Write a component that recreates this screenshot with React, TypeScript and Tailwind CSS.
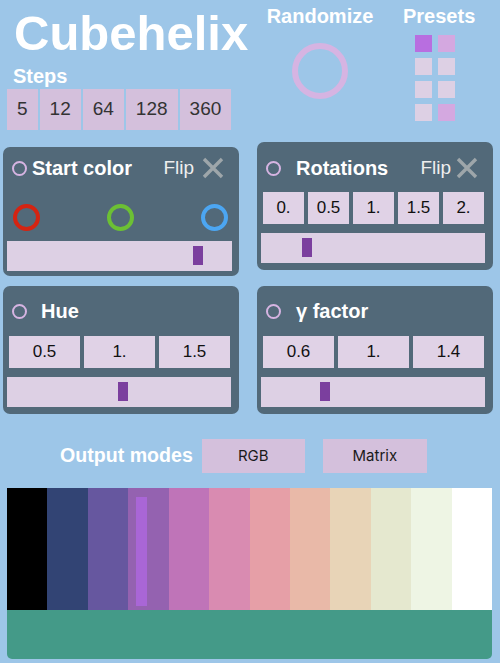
import React from 'react';

const STEPS = ['5', '12', '64', '128', '360'];

const PRESETS = ['#b86ee0', '#d4a8e0', '#ddd0e4', '#ddd0e4', '#ddd0e4', '#ddd0e4', '#ddd0e4', '#d4a8e0'];

const SWATCHES = [
  '#000000',
  '#324474',
  '#66579f',
  '#9462b0',
  '#bf74b8',
  '#d98bb1',
  '#e69fa7',
  '#e9b9a8',
  '#e8d4b7',
  '#e5e8cf',
  '#eef5e4',
  '#ffffff',
];

const Ring: React.FC = () => (
  <div className="h-[15px] w-[15px] shrink-0 rounded-full border-2 border-[#d6b4e2]" />
);

const CloseX: React.FC = () => (
  <svg width="22" height="22" viewBox="0 0 22 22" className="shrink-0">
    <path d="M2 2 L20 20 M20 2 L2 20" stroke="#9ea6aa" strokeWidth="3.4" strokeLinecap="butt" />
  </svg>
);

const Slider: React.FC<{ at: number }> = ({ at }) => (
  <div className="relative h-[30px] bg-[#ddd0e4]">
    <div className="absolute top-[5px] h-[19px] w-[10px] bg-[#7b3f9e]" style={{ left: at }} />
  </div>
);

const ValueRow: React.FC<{ values: string[] }> = ({ values }) => (
  <div className="ml-[2px] mr-[1px] flex gap-[4px]">
    {values.map((v) => (
      <div key={v} className="flex h-[32px] flex-1 items-center justify-center bg-[#e0d2e6] text-[17px] text-[#111]">
        {v}
      </div>
    ))}
  </div>
);

export default function App() {
  return (
    <div className="h-[663px] w-[500px] overflow-hidden bg-[#9dc6e8] font-['Liberation_Sans',Arial,sans-serif]">
      {/* top area */}
      <div className="flex">
        <div className="w-[250px] pl-[7px]">
          <h1 className="ml-[7px] pt-[9px] text-[49px] font-bold leading-none text-white">Cubehelix</h1>
          <div className="ml-[6px] mt-[8px] text-[20px] font-bold leading-none text-white">Steps</div>
          <div className="mt-[3px] flex gap-[2px]">
            {STEPS.map((s) => (
              <div key={s} className="flex h-[41px] items-center bg-[#d4c0dc] px-[10px] text-[19px] text-[#333]">
                {s}
              </div>
            ))}
          </div>
        </div>
        <div className="flex w-[140px] flex-col items-center pt-[6px]">
          <div className="text-[20px] font-bold leading-none text-white">Randomize</div>
          <div className="mt-[17px] h-[56px] w-[56px] rounded-full border-[6px] border-[#d6b4e2]" />
        </div>
        <div className="ml-[13px] pt-[6px]">
          <div className="text-[20px] font-bold leading-none text-white">Presets</div>
          <div className="ml-[12px] mt-[9px] grid w-[40px] grid-cols-2 gap-[6px]">
            {PRESETS.map((c, i) => (
              <div key={i} className="h-[17px] w-[17px]" style={{ backgroundColor: c }} />
            ))}
          </div>
        </div>
      </div>

      {/* panel row 1 */}
      <div className="mt-[12px] flex items-start gap-[18px] pl-[3px]">
        <div className="mt-[5px] w-[236px] rounded-[7px] bg-[#526979] pb-[5px] pl-[4px] pr-[7px] pt-[6px]">
          <div className="flex h-[30px] items-center pl-[5px] pr-[8px]">
            <Ring />
            <span className="ml-[5px] text-[20px] font-bold text-white">Start color</span>
            <span className="ml-auto text-[19px] text-[#eeeeee]">Flip</span>
            <span className="ml-[8px]">
              <CloseX />
            </span>
          </div>
          <div className="ml-[6px] mr-[4px] mt-[21px] flex justify-between">
            <div className="h-[27px] w-[27px] rounded-full border-[4px] border-[#d42412]" />
            <div className="h-[27px] w-[27px] rounded-full border-[4px] border-[#6cc034]" />
            <div className="h-[27px] w-[27px] rounded-full border-[4px] border-[#4ca6f2]" />
          </div>
          <div className="mt-[10px]">
            <Slider at={186} />
          </div>
        </div>

        <div className="w-[236px] rounded-[7px] bg-[#526979] pb-[7px] pl-[4px] pr-[8px] pt-[11px]">
          <div className="flex h-[30px] items-center pl-[5px] pr-[7px]">
            <Ring />
            <span className="ml-[15px] text-[20px] font-bold text-white">Rotations</span>
            <span className="ml-auto text-[19px] text-[#eeeeee]">Flip</span>
            <span className="ml-[5px]">
              <CloseX />
            </span>
          </div>
          <div className="mt-[9px]">
            <ValueRow values={['0.', '0.5', '1.', '1.5', '2.']} />
          </div>
          <div className="mt-[9px]">
            <Slider at={41} />
          </div>
        </div>
      </div>

      {/* panel row 2 */}
      <div className="mt-[10px] flex items-start gap-[18px] pl-[3px]">
        <div className="w-[236px] rounded-[7px] bg-[#526979] pb-[7px] pl-[4px] pr-[8px] pt-[10px]">
          <div className="flex h-[30px] items-center pl-[5px]">
            <Ring />
            <span className="ml-[14px] text-[20px] font-bold text-white">Hue</span>
          </div>
          <div className="mt-[10px]">
            <ValueRow values={['0.5', '1.', '1.5']} />
          </div>
          <div className="mt-[9px]">
            <Slider at={111} />
          </div>
        </div>

        <div className="w-[236px] rounded-[7px] bg-[#526979] pb-[7px] pl-[4px] pr-[8px] pt-[10px]">
          <div className="flex h-[30px] items-center pl-[5px]">
            <Ring />
            <span className="ml-[15px] text-[20px] font-bold text-white">γ factor</span>
          </div>
          <div className="mt-[10px]">
            <ValueRow values={['0.6', '1.', '1.4']} />
          </div>
          <div className="mt-[9px]">
            <Slider at={59} />
          </div>
        </div>
      </div>

      {/* output modes */}
      <div className="mt-[25px] flex items-center pl-[60px]">
        <span className="text-[19.6px] font-bold text-white">Output modes</span>
        <div className="ml-[9px] flex h-[34px] w-[103px] items-center justify-center bg-[#d4c0dc] font-['Inter',sans-serif] text-[15px] text-[#1a1a1a]">
          RGB
        </div>
        <div className="ml-[18px] flex h-[34px] w-[104px] items-center justify-center bg-[#d4c0dc] font-['Inter',sans-serif] text-[15px] text-[#1a1a1a]">
          Matrix
        </div>
      </div>

      {/* palette */}
      <div className="mx-[7px] mt-[15px] w-[485px]">
        <div className="flex h-[122px]">
          {SWATCHES.map((c, i) => (
            <div key={i} className="relative flex-1" style={{ backgroundColor: c }}>
              {i === 3 && <div className="absolute left-[8px] top-[9px] h-[109px] w-[11px] bg-[#a966d6]" />}
            </div>
          ))}
        </div>
        <div className="h-[49px] rounded-b-[5px] bg-[#449a88]" />
      </div>
    </div>
  );
}
